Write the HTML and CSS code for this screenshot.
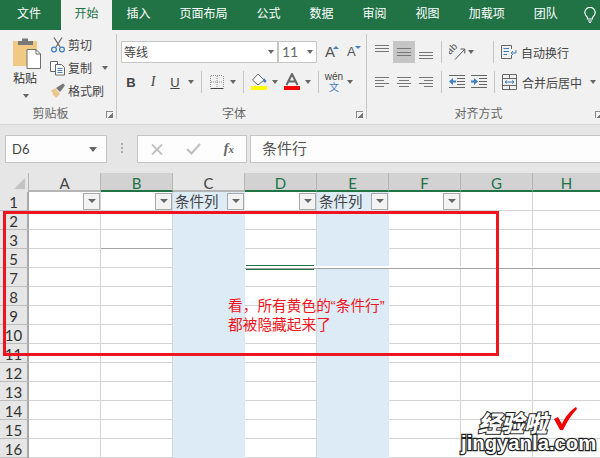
FILE: index.html
```html
<!DOCTYPE html>
<html lang="zh-CN">
<head>
    <meta charset="UTF-8">
    <title>条件行</title>
    <link rel="stylesheet" href="styles.css">
</head>
<body>
    <nav class="tabs">
        <span class="tab tab-file">文件</span>
        <span class="tab tab-active">开始</span>
        <span class="tab">插入</span>
        <span class="tab">页面布局</span>
        <span class="tab">公式</span>
        <span class="tab">数据</span>
        <span class="tab">审阅</span>
        <span class="tab">视图</span>
        <span class="tab">加载项</span>
        <span class="tab">团队</span>
        <svg class="bulb" width="12" height="16" viewBox="0 0 12 16" fill="none" stroke="#fff" stroke-width="1.2"><path d="M3.5 10.5C2 9 .8 7.8 .8 5.6A5.2 5.2 0 0 1 11.2 5.6C11.2 7.8 10 9 8.5 10.5V12H3.5Z"/><path d="M4 14H8M5 15.5H7"/></svg>
    </nav>

    <section class="ribbon">
        <div class="group group-clipboard">
            <div class="group-body">
                <div class="paste">
                    <svg width="30" height="32" viewBox="0 0 30 32">
                        <rect x="1" y="4" width="24" height="25" fill="#f0c982"/>
                        <path d="M6 8V4H10V1.5H16V4H21V8Z" fill="#787878"/>
                        <path d="M15 12.5H24L28.5 17V31.5H15Z" fill="#fff" stroke="#6e6e6e"/>
                        <path d="M24 12.5V17H28.5" fill="none" stroke="#6e6e6e"/>
                    </svg>
                    <span class="paste-label">粘贴</span>
                    <i class="arrow"></i>
                </div>
                <div class="clip-list">
                    <div class="clip-item">
                        <svg width="16" height="16" viewBox="0 0 16 16" fill="none"><path d="M4 .5L10 10M12 .5L6 10" stroke="#666" stroke-width="1.2"/><circle cx="4" cy="12.5" r="2.4" stroke="#3f7fc1" stroke-width="1.3"/><circle cx="12" cy="12.5" r="2.4" stroke="#3f7fc1" stroke-width="1.3"/></svg>
                        <span>剪切</span>
                    </div>
                    <div class="clip-item">
                        <svg width="16" height="16" viewBox="0 0 16 16" fill="#fff" stroke="#666"><path d="M.5 1.5H7.5V11.5H.5Z"/><path d="M5.5 4.5H11.5L14.5 7.5V15H5.5Z"/><path d="M7.5 8.5H12.5M7.5 10.5H12.5M7.5 12.5H12.5" stroke="#3f7fc1"/></svg>
                        <span>复制</span>
                        <i class="arrow arrow-copy"></i>
                    </div>
                    <div class="clip-item">
                        <svg width="16" height="16" viewBox="0 0 16 16"><path d="M1 8L5 5L10 11L6 15L4 12L3 13L3 10Z" fill="#e9c88e"/><path d="M6 5L13 .5L15 2.5L10 9Z" fill="#777"/></svg>
                        <span>格式刷</span>
                    </div>
                </div>
            </div>
            <div class="group-label">剪贴板<i class="launcher"></i></div>
        </div>

        <div class="group group-font">
            <div class="group-body group-stack">
                <div class="tool-row">
                    <div class="select select-font"><span>等线</span><i class="arrow"></i></div>
                    <div class="select select-size"><span>11</span><i class="arrow"></i></div>
                    <span class="grow-btn grow-up">A<i class="mini mini-up"></i></span>
                    <span class="grow-btn grow-down">A<i class="mini mini-down"></i></span>
                </div>
                <div class="tool-row">
                    <span class="btn btn-b">B</span>
                    <span class="btn btn-i">I</span>
                    <span class="btn btn-u">U</span>
                    <i class="arrow arrow-slot"></i>
                    <i class="sep"></i>
                    <span class="btn">
                        <svg width="14" height="14" viewBox="0 0 14 14" stroke="#8a8a8a" stroke-dasharray="1 1"><path d="M.5 1V13M7 1V13M13.5 1V13M1 .5H13M1 7H13"/><path d="M.5 13.5H13.5" stroke="#444" stroke-dasharray="none"/></svg>
                    </span>
                    <i class="arrow arrow-slot"></i>
                    <i class="sep"></i>
                    <span class="btn">
                        <svg width="18" height="18" viewBox="0 0 18 18"><path d="M8 1L14 7L8 12L2.5 7Z" fill="#fff" stroke="#666"/><path d="M14 5L16.5 8L15 10L13 8Z" fill="#3f7fc1"/><rect x="1" y="13" width="16" height="4" fill="#ffff00"/></svg>
                    </span>
                    <i class="arrow arrow-slot"></i>
                    <span class="btn btn-color">
                        <svg width="16" height="18" viewBox="0 0 16 18"><path d="M2.5 12L8 1L13.5 12M4.5 8.5H11.5" fill="none" stroke="#666" stroke-width="2"/><rect y="13" width="16" height="4" fill="#ff0000"/></svg>
                    </span>
                    <i class="arrow arrow-slot"></i>
                    <i class="sep"></i>
                    <span class="btn btn-wen"><b>wén</b><em>文</em></span>
                    <i class="arrow arrow-slot"></i>
                </div>
            </div>
            <div class="group-label">字体<i class="launcher"></i></div>
        </div>

        <div class="group group-align">
            <div class="group-body group-stack">
                <div class="tool-row">
                    <span class="btn"><svg width="14" height="14" viewBox="0 0 14 14" stroke="#777"><path d="M0 .5H14M0 3.5H14M0 6.5H14"/></svg></span>
                    <span class="btn btn-on"><svg width="14" height="14" viewBox="0 0 14 14" stroke="#777"><path d="M0 3.5H14M0 7.5H14M0 10.5H14"/></svg></span>
                    <span class="btn"><svg width="14" height="14" viewBox="0 0 14 14" stroke="#777"><path d="M0 7.5H14M0 10.5H14M0 13.5H14"/></svg></span>
                    <i class="sep"></i>
                    <span class="btn"><svg width="17" height="17" viewBox="0 0 17 17" fill="none"><text class="orient-text" x="1" y="11" transform="rotate(-45 1 11)">ab</text><path d="M6 15.5L15.5 5.5M11.5 5H15.8V9.500" stroke="#555"/></svg></span>
                    <i class="arrow"></i>
                    <i class="sep sep-wrap"></i>
                    <svg class="wide-icon" width="16" height="16" viewBox="0 0 16 16" fill="none" stroke="#666"><path d="M.5 1.5H10.5V5M.5 1.5V14.5H10.5V11"/><path d="M2.5 4.5H8M2.5 7.5H8M2.5 10.5H6" stroke="#3f7fc1"/><path d="M15 6V9H10M12 7L10 9L12 11" stroke="#3f7fc1"/></svg>
                    <span class="wide-text">自动换行</span>
                </div>
                <div class="tool-row">
                    <span class="btn"><svg width="14" height="14" viewBox="0 0 14 14" stroke="#777"><path d="M0 2.5H14M0 5.5H9M0 8.5H14M0 11.5H9"/></svg></span>
                    <span class="btn"><svg width="14" height="14" viewBox="0 0 14 14" stroke="#777"><path d="M0 2.5H14M2 5.5H12M0 8.5H14M2 11.5H12"/></svg></span>
                    <span class="btn"><svg width="14" height="14" viewBox="0 0 14 14" stroke="#777"><path d="M0 2.5H14M5 5.5H14M0 8.5H14M5 11.5H14"/></svg></span>
                    <i class="sep"></i>
                    <span class="indent"><svg width="16" height="14" viewBox="0 0 16 14"><path d="M0 6.5L4 3V5.5H7V7.5H4V10Z" fill="#3f7fc1"/><path d="M0 .5H16M8 3.5H16M8 6.5H16M8 9.5H16M0 12.5H16" stroke="#666"/></svg></span>
                    <span class="indent"><svg width="16" height="14" viewBox="0 0 16 14"><path d="M7 6.5L3 3V5.5H0V7.5H3V10Z" fill="#3f7fc1"/><path d="M0 .5H16M8 3.5H16M8 6.5H16M8 9.5H16M0 12.5H16" stroke="#666"/></svg></span>
                    <i class="sep sep-merge"></i>
                    <svg class="wide-icon" width="16" height="16" viewBox="0 0 16 16" fill="none" stroke="#666"><path d="M.5 .5H14.5V15.5H.5ZM.5 4.5H14.5M.5 11.5H14.5M7.5 .5V4.5M7.5 11.5V15.5"/><path d="M3 8H12M3 8L5 6.5M3 8L5 9.5M12 8L10 6.5M12 8L10 9.5" stroke="#3f7fc1"/></svg>
                    <span class="wide-text">合并后居中</span>
                    <i class="arrow arrow-merge"></i>
                </div>
            </div>
            <div class="group-label">对齐方式<i class="launcher"></i></div>
        </div>
    </section>

    <section class="formula-bar">
        <div class="name-box"><span>D6</span><i class="arrow arrow-name"></i></div>
        <i class="grip"></i>
        <div class="fx-box">
            <svg width="12" height="11" viewBox="0 0 12 11" stroke="#c0c0c0" stroke-width="1.8"><path d="M1 .5L11 10.5M11 .5L1 10.5"/></svg>
            <svg width="15" height="12" viewBox="0 0 15 12" fill="none" stroke="#c0c0c0" stroke-width="2"><path d="M1 6L5.5 10.5L14 1"/></svg>
            <span class="fx">f<small>x</small></span>
        </div>
        <div class="formula-input">条件行</div>
    </section>

    <main class="sheet">
        <div class="row row-head">
            <div class="corner"><i class="corner-mark"></i></div>
            <div class="col-head">A</div>
            <div class="col-head col-on">B</div>
            <div class="col-head">C</div>
            <div class="col-head col-on">D</div>
            <div class="col-head col-on">E</div>
            <div class="col-head col-on">F</div>
            <div class="col-head col-on">G</div>
            <div class="col-head col-on col-last">H</div>
        </div>
        <div class="row">
            <div class="row-num">1</div>
            <div class="cell"><i class="filter"></i></div>
            <div class="cell"><i class="filter"></i></div>
            <div class="cell cell-blue"><span class="cell-text">条件列</span><i class="filter"></i></div>
            <div class="cell"><i class="filter"></i></div>
            <div class="cell cell-blue"><span class="cell-text">条件列</span><i class="filter"></i></div>
            <div class="cell"><i class="filter"></i></div>
            <div class="cell"></div>
            <div class="cell cell-last"></div>
        </div>
        <div class="row">
            <div class="row-num">2</div>
            <div class="cell"></div><div class="cell"></div><div class="cell cell-blue"></div><div class="cell"></div><div class="cell cell-blue"></div><div class="cell"></div><div class="cell"></div><div class="cell cell-last"></div>
        </div>
        <div class="row">
            <div class="row-num">3</div>
            <div class="cell"></div><div class="cell cell-dark"></div><div class="cell cell-blue"></div><div class="cell"></div><div class="cell cell-blue"></div><div class="cell"></div><div class="cell"></div><div class="cell cell-last"></div>
        </div>
        <div class="row">
            <div class="row-num">5</div>
            <div class="cell"></div><div class="cell"></div><div class="cell cell-blue"></div><div class="cell"></div><div class="cell cell-blue"></div><div class="cell"></div><div class="cell"></div><div class="cell cell-last"></div>
        </div>
        <div class="row">
            <div class="row-num">7</div>
            <div class="cell"></div><div class="cell"></div><div class="cell cell-blue"></div><div class="cell"></div><div class="cell cell-blue"></div><div class="cell"></div><div class="cell"></div><div class="cell cell-last"></div>
        </div>
        <div class="row">
            <div class="row-num">8</div>
            <div class="cell"></div><div class="cell"></div><div class="cell cell-blue"></div><div class="cell"></div><div class="cell cell-blue"></div><div class="cell"></div><div class="cell"></div><div class="cell cell-last"></div>
        </div>
        <div class="row">
            <div class="row-num">9</div>
            <div class="cell"></div><div class="cell"></div><div class="cell cell-blue"></div><div class="cell"></div><div class="cell cell-blue"></div><div class="cell"></div><div class="cell"></div><div class="cell cell-last"></div>
        </div>
        <div class="row">
            <div class="row-num">10</div>
            <div class="cell"></div><div class="cell"></div><div class="cell cell-blue"></div><div class="cell"></div><div class="cell cell-blue"></div><div class="cell"></div><div class="cell"></div><div class="cell cell-last"></div>
        </div>
        <div class="row">
            <div class="row-num">11</div>
            <div class="cell"></div><div class="cell"></div><div class="cell cell-blue"></div><div class="cell"></div><div class="cell cell-blue"></div><div class="cell"></div><div class="cell"></div><div class="cell cell-last"></div>
        </div>
        <div class="row">
            <div class="row-num">12</div>
            <div class="cell"></div><div class="cell"></div><div class="cell cell-blue"></div><div class="cell"></div><div class="cell cell-blue"></div><div class="cell"></div><div class="cell"></div><div class="cell cell-last"></div>
        </div>
        <div class="row">
            <div class="row-num">13</div>
            <div class="cell"></div><div class="cell"></div><div class="cell cell-blue"></div><div class="cell"></div><div class="cell cell-blue"></div><div class="cell"></div><div class="cell"></div><div class="cell cell-last"></div>
        </div>
        <div class="row">
            <div class="row-num">14</div>
            <div class="cell"></div><div class="cell"></div><div class="cell cell-blue"></div><div class="cell"></div><div class="cell cell-blue"></div><div class="cell"></div><div class="cell"></div><div class="cell cell-last"></div>
        </div>
        <div class="row">
            <div class="row-num">15</div>
            <div class="cell"></div><div class="cell"></div><div class="cell cell-blue"></div><div class="cell"></div><div class="cell cell-blue"></div><div class="cell"></div><div class="cell"></div><div class="cell cell-last"></div>
        </div>
        <div class="row">
            <div class="row-num">16</div>
            <div class="cell"></div><div class="cell"></div><div class="cell cell-blue"></div><div class="cell"></div><div class="cell cell-blue"></div><div class="cell"></div><div class="cell"></div><div class="cell cell-last"></div>
        </div>

        <!-- hidden row marker, drawn over the grid -->
        <div class="hidden-band"></div>
        <div class="selected-edge"></div>

        <!-- annotation the author pasted over the sheet -->
        <div class="red-frame"></div>
        <div class="note">看，所有黄色的“条件行”<br>都被隐藏起来了</div>

        <div class="watermark">
            <div class="mark-top">
                <span>经验啦</span>
                <svg width="24" height="25" viewBox="0 0 24 25"><path d="M1 13L5 11L9 18C12 11 17 5 23 1L24 3C18 9 14 16 10 24H7Z" fill="#f00000"/></svg>
            </div>
            <div class="mark-url">jingyanla.com</div>
        </div>
    </main>
</body>
</html>
```

FILE: styles.css
```css
:root {
    --green: #217346;
    --ribbon: #f1f1f1;
    --chrome: #e6e6e6;
    --line: #d4d4d4;
    --border: #c6c6c6;
    --text: #444;
    --blue-cell: #ddebf7;
    --red: #ef1520;
}

* {
    margin: 0;
    padding: 0;
    box-sizing: border-box;
}

html, body {
    width: 600px;
    height: 458px;
    overflow: hidden;
}

body {
    font-family: "Noto Sans CJK SC", "Liberation Sans", sans-serif;
    font-size: 12px;
    color: var(--text);
    background: var(--chrome);
}

i {
    display: block;
    font-style: normal;
}

/* tabs */
.tabs {
    display: flex;
    height: 30px;
    background: var(--green);
    color: #fff;
    white-space: nowrap;
}

.tab {
    padding: 5px 14.5px 0;
    line-height: 16px;
}

.tab-file {
    padding: 5px 20px 0 17px;
}

.tab-active {
    background: var(--ribbon);
    color: var(--green);
    padding: 5px 13.5px 0;
}

.bulb {
    margin: 7px 0 0 12px;
    flex: none;
}

/* ribbon */
.ribbon {
    display: flex;
    height: 95px;
    background: var(--ribbon);
    border-bottom: 1px solid var(--line);
}

.group {
    display: flex;
    flex-direction: column;
    flex: none;
    height: 94px;
    position: relative;
}

.group::after {
    content: "";
    position: absolute;
    right: 0;
    top: 4px;
    bottom: 5px;
    width: 1px;
    background: var(--border);
}

.group-clipboard { width: 117px; }
.group-font { width: 250px; padding-left: 3px; }
.group-align { width: 233px; padding-left: 4px; }
.group-align::after { display: none; }

.group-body {
    flex: 1;
    display: flex;
}

.group-stack {
    flex-direction: column;
    gap: 8px;
    padding-top: 11px;
}

.group-label {
    height: 22px;
    padding-top: 2px;
    line-height: 18px;
    text-align: center;
    color: #666;
    padding-right: 16px;
    position: relative;
}

.group-font .group-label { padding-right: 19px; }
.group-align .group-label { padding-right: 14px; }

.launcher {
    position: absolute;
    right: 4px;
    top: 9px;
    width: 7px;
    height: 7px;
    border-left: 1px solid #8a8a8a;
    border-top: 1px solid #8a8a8a;
    background: linear-gradient(135deg, transparent 55%, #777 55%);
}

.group-align .launcher { right: -2px; }

.arrow {
    width: 0;
    height: 0;
    border-left: 3.5px solid transparent;
    border-right: 3.5px solid transparent;
    border-top: 4px solid #666;
    flex: none;
}

.paste {
    width: 50px;
    padding: 7px 0 0 12px;
    display: flex;
    flex-direction: column;
}

.paste-label {
    margin: 1px 0 0 1px;
    line-height: 16px;
    color: #333;
}

.paste .arrow {
    margin: 8px 0 0 11px;
}

.clip-list {
    display: flex;
    flex-direction: column;
    padding-top: 3px;
}

.clip-item {
    display: flex;
    align-items: center;
    height: 23px;
    gap: 2px;
}

.arrow-copy {
    margin-left: 8px;
}

.tool-row {
    display: flex;
    align-items: center;
    height: 22px;
}

.select {
    display: flex;
    align-items: center;
    justify-content: space-between;
    height: 22px;
    background: #fff;
    border: 1px solid var(--border);
    padding: 0 3px;
}

.select-font {
    width: 157px;
    margin-left: 1px;
    padding-left: 2px;
}

.select-size {
    width: 39px;
    color: #666;
    font-family: Lato, sans-serif;
    font-size: 14px;
}

.select span {
    line-height: 20px;
}

.grow-btn {
    position: relative;
    width: 13px;
    font-family: "Liberation Sans", sans-serif;
    font-size: 14px;
    color: #555;
    line-height: 22px;
}

.grow-up { margin-left: 8px; font-size: 15px; }
.grow-down { margin-left: 9px; font-size: 13px; }

.mini {
    position: absolute;
    top: 5px;
    left: 8px;
    width: 0;
    height: 0;
    border-left: 3px solid transparent;
    border-right: 3px solid transparent;
}

.mini-up { border-bottom: 3px solid #3f7fc1; }
.mini-down { border-top: 3px solid #3f7fc1; }

.btn {
    flex: none;
    display: flex;
    align-items: center;
    justify-content: center;
    width: 22px;
    height: 22px;
    font-family: "Liberation Sans", sans-serif;
    font-size: 13px;
}

.btn-b { font-weight: bold; }
.btn-i { font-style: italic; font-family: "Liberation Serif", serif; font-size: 14px; }
.btn-u { text-decoration: underline; }
.btn-on { background: #c5c5c5; }
.btn-color { margin-left: 1px; }

.btn-wen {
    flex-direction: column;
    font-size: 10px;
    line-height: 10px;
}

.btn-wen b {
    font-weight: normal;
}

.btn-wen em {
    font-style: normal;
    color: #3f7fc1;
    font-family: "Noto Sans CJK SC", sans-serif;
}

.orient-text {
    font-family: "Liberation Sans", sans-serif;
    font-size: 10px;
    fill: #555;
}

.arrow-slot {
    margin: 0 2px;
}

.sep {
    flex: none;
    width: 1px;
    height: 22px;
    background: var(--border);
    margin: 0 4px 0 5px;
}

.group-align .sep { margin-left: 4px; }
.group-align .sep-wrap { margin: 0 7px 0 19px; }
.group-align .sep-merge { margin: 0 7px 0 4px; }

.indent {
    flex: none;
    width: 22px;
    padding-left: 3px;
    display: flex;
    justify-content: flex-start;
}

.wide-icon {
    flex: none;
}

.wide-text {
    margin-left: 4px;
    font-size: 12px;
    white-space: nowrap;
}

.arrow-merge {
    margin-left: 8px;
}

/* formula bar */
.formula-bar {
    display: flex;
    align-items: flex-start;
    height: 48px;
    padding-top: 10px;
    background: var(--chrome);
}

.name-box {
    display: flex;
    align-items: center;
    justify-content: space-between;
    width: 102px;
    height: 28px;
    margin-left: 5px;
    padding: 0 9px 0 6px;
    background: #fdfdfd;
    border: 1px solid var(--border);
    font-family: Lato, sans-serif;
    font-size: 13px;
}

.arrow-name {
    border-left-width: 4px;
    border-right-width: 4px;
    border-top-width: 5px;
}

.grip {
    width: 2px;
    height: 11px;
    margin: 8px 14px 0 14px;
    background: repeating-linear-gradient(#aaa 0 2px, transparent 2px 4px);
}

.fx-box {
    display: flex;
    align-items: center;
    justify-content: space-between;
    width: 110px;
    height: 28px;
    padding: 0 12px 0 13px;
    background: #fdfdfd;
    border: 1px solid var(--border);
}

.fx {
    font-family: "Liberation Serif", serif;
    font-style: italic;
    font-weight: bold;
    font-size: 14px;
    color: #666;
}

.fx small {
    font-size: 11px;
}

.formula-input {
    flex: 1;
    height: 28px;
    margin-left: 3px;
    padding-left: 11px;
    background: #fdfdfd;
    border-top: 1px solid var(--border);
    border-bottom: 1px solid var(--border);
    border-left: 1px solid var(--border);
    font-size: 15px;
    line-height: 24px;
    color: #555;
}

/* sheet */
.sheet {
    position: relative;
    height: 285px;
    background: #fff;
    font-family: Lato, "Noto Sans CJK SC", sans-serif;
}

.row {
    display: flex;
    height: 19px;
}

.row-head {
    background: var(--chrome);
}

.corner {
    flex: none;
    width: 29px;
    height: 19px;
    padding: 5px 0 0 14px;
    border-right: 1px solid #b5b5b5;
}

.corner-mark {
    width: 0;
    height: 0;
    border-left: 11px solid transparent;
    border-bottom: 11px solid #c3c3c3;
}

.col-head {
    flex: none;
    width: 72px;
    height: 19px;
    padding-top: 2px;
    text-align: center;
    font-size: 15px;
    line-height: 17px;
    border-right: 1px solid #b5b5b5;
    border-bottom: 2px solid #b5b5b5;
}

.col-on {
    background: #d2d2d2;
    color: var(--green);
    border-bottom-color: var(--green);
}

.col-last {
    width: 67px;
    border-right: 0;
}

.row-num {
    flex: none;
    width: 29px;
    height: 19px;
    padding-top: 1px;
    background: var(--chrome);
    border-right: 2px solid #a8a8a8;
    border-bottom: 1px solid #bdbdbd;
    text-align: center;
    font-size: 15px;
    line-height: 19px;
    color: #333;
}

.cell {
    flex: none;
    display: flex;
    align-items: center;
    justify-content: flex-end;
    position: relative;
    width: 72px;
    height: 19px;
    border-right: 1px solid var(--line);
    border-bottom: 1px solid var(--line);
}

.cell-blue {
    background: var(--blue-cell);
    border-color: var(--blue-cell);
}

.cell-dark {
    border-bottom-color: #a5a5a5;
}

.cell-last {
    width: 67px;
    border-right: 0;
}

.cell-text {
    position: absolute;
    left: 2px;
    top: 0;
    font-size: 14.5px;
    line-height: 20px;
    color: #444;
    white-space: nowrap;
}

.filter {
    display: flex;
    align-items: center;
    justify-content: center;
    width: 17px;
    height: 17px;
    background: #f3f3f3;
    border: 1px solid #a9a9a9;
}

.filter::before {
    content: "";
    border-left: 4px solid transparent;
    border-right: 4px solid transparent;
    border-top: 4px solid #666;
}

.hidden-band {
    position: absolute;
    left: 245px;
    right: 0;
    top: 93px;
    height: 3px;
    background: #fff;
    border-bottom: 1px solid #a5a5a5;
}

.selected-edge {
    position: absolute;
    left: 246px;
    width: 68px;
    top: 92px;
    height: 5px;
    border-top: 1px solid var(--green);
    border-bottom: 1px solid var(--green);
}

.red-frame {
    position: absolute;
    left: 3px;
    top: 38px;
    width: 496px;
    height: 145px;
    border: 3px solid var(--red);
}

.note {
    position: absolute;
    left: 228px;
    top: 124px;
    font-family: "Liberation Sans", "Noto Sans CJK SC", sans-serif;
    font-size: 14.7px;
    line-height: 19px;
    color: var(--red);
    white-space: nowrap;
}

.watermark {
    position: absolute;
    left: 461px;
    top: 233px;
    width: 130px;
}

.mark-top {
    display: flex;
    align-items: flex-start;
    padding-left: 17px;
    font-family: "Noto Sans CJK SC", sans-serif;
    font-weight: 900;
    font-style: italic;
    font-size: 23px;
    line-height: 32px;
    color: #fff;
    -webkit-text-stroke: 2px #222;
    paint-order: stroke fill;
}

.mark-top svg {
    margin-left: 6px;
}

.mark-url {
    margin-top: -6px;
    font-family: "Liberation Sans", sans-serif;
    font-weight: bold;
    font-size: 20.3px;
    line-height: 22px;
    color: #fff;
    -webkit-text-stroke: 2.5px #222;
    paint-order: stroke fill;
    white-space: nowrap;
}
```
